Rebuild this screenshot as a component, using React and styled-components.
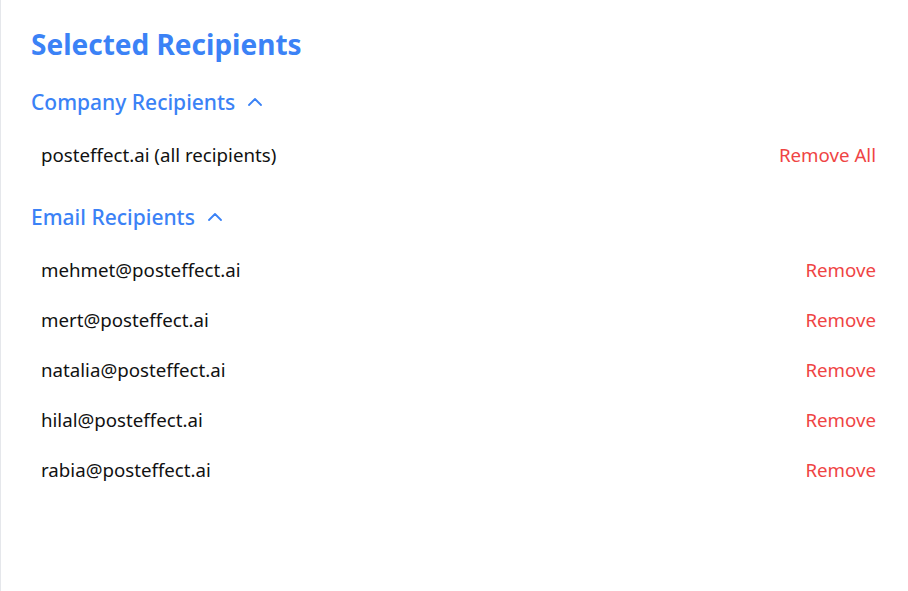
import React from 'react'
import styled, { createGlobalStyle } from 'styled-components'

const GlobalStyle = createGlobalStyle`
  html, body {
    margin: 0;
    padding: 0;
    background: #ffffff;
  }
  body {
    font-family: "Noto Sans", "Open Sans", sans-serif;
  }
`;

const Page = styled.div`
  min-height: 591px;
  box-sizing: border-box;
  border-left: 1px solid #e5e7eb;
  padding: 26px 22px 0 30px;
`;

const Title = styled.h1`
  margin: 0 0 25px;
  font-size: 28px;
  line-height: 36px;
  font-weight: 700;
  color: #3b82f6;
`;

const Section = styled.section`
  margin-bottom: 23px;
`;

const SectionHeader = styled.button`
  display: flex;
  align-items: center;
  gap: 13px;
  padding: 0;
  border: none;
  background: none;
  cursor: pointer;
  font-family: inherit;
  font-size: 21px;
  line-height: 30px;
  font-weight: 500;
  color: #3b82f6;
  margin-bottom: 12px;
`;

const Chevron = styled.svg`
  width: 14px;
  height: 8px;
  display: block;
  fill: none;
  stroke: currentcolor;
  stroke-width: 1.8;
  stroke-linecap: round;
  stroke-linejoin: round;
`;

const List = styled.ul`
  list-style: none;
  margin: 0;
  padding: 0;
`;

const Row = styled.li`
  display: flex;
  align-items: center;
  justify-content: space-between;
  height: 50px;
  padding: 0 10px;
  font-size: 18.7px;
  color: #111111;
`;

const RemoveButton = styled.button`
  padding: 0;
  border: none;
  background: none;
  cursor: pointer;
  font-family: inherit;
  font-size: 18.7px;
  color: #ef4444;
`;

const emails = [
  'mehmet@posteffect.ai',
  'mert@posteffect.ai',
  'natalia@posteffect.ai',
  'hilal@posteffect.ai',
  'rabia@posteffect.ai',
];

function UpArrow() {
  return (
    <Chevron viewBox="0 0 14 8" aria-hidden="true">
      <path d="M1 7 7 1 13 7" />
    </Chevron>
  );
}

export default function App() {
  return (
    <>
      <GlobalStyle />
      <Page>
        <Title>Selected Recipients</Title>
        <Section>
          <SectionHeader>
            Company Recipients <UpArrow />
          </SectionHeader>
          <List>
            <Row>
              <span>posteffect.ai (all recipients)</span>
              <RemoveButton>Remove All</RemoveButton>
            </Row>
          </List>
        </Section>
        <Section>
          <SectionHeader>
            Email Recipients <UpArrow />
          </SectionHeader>
          <List>
            {emails.map(email => (
              <Row key={email}>
                <span>{email}</span>
                <RemoveButton>Remove</RemoveButton>
              </Row>
            ))}
          </List>
        </Section>
      </Page>
    </>
  );
}
